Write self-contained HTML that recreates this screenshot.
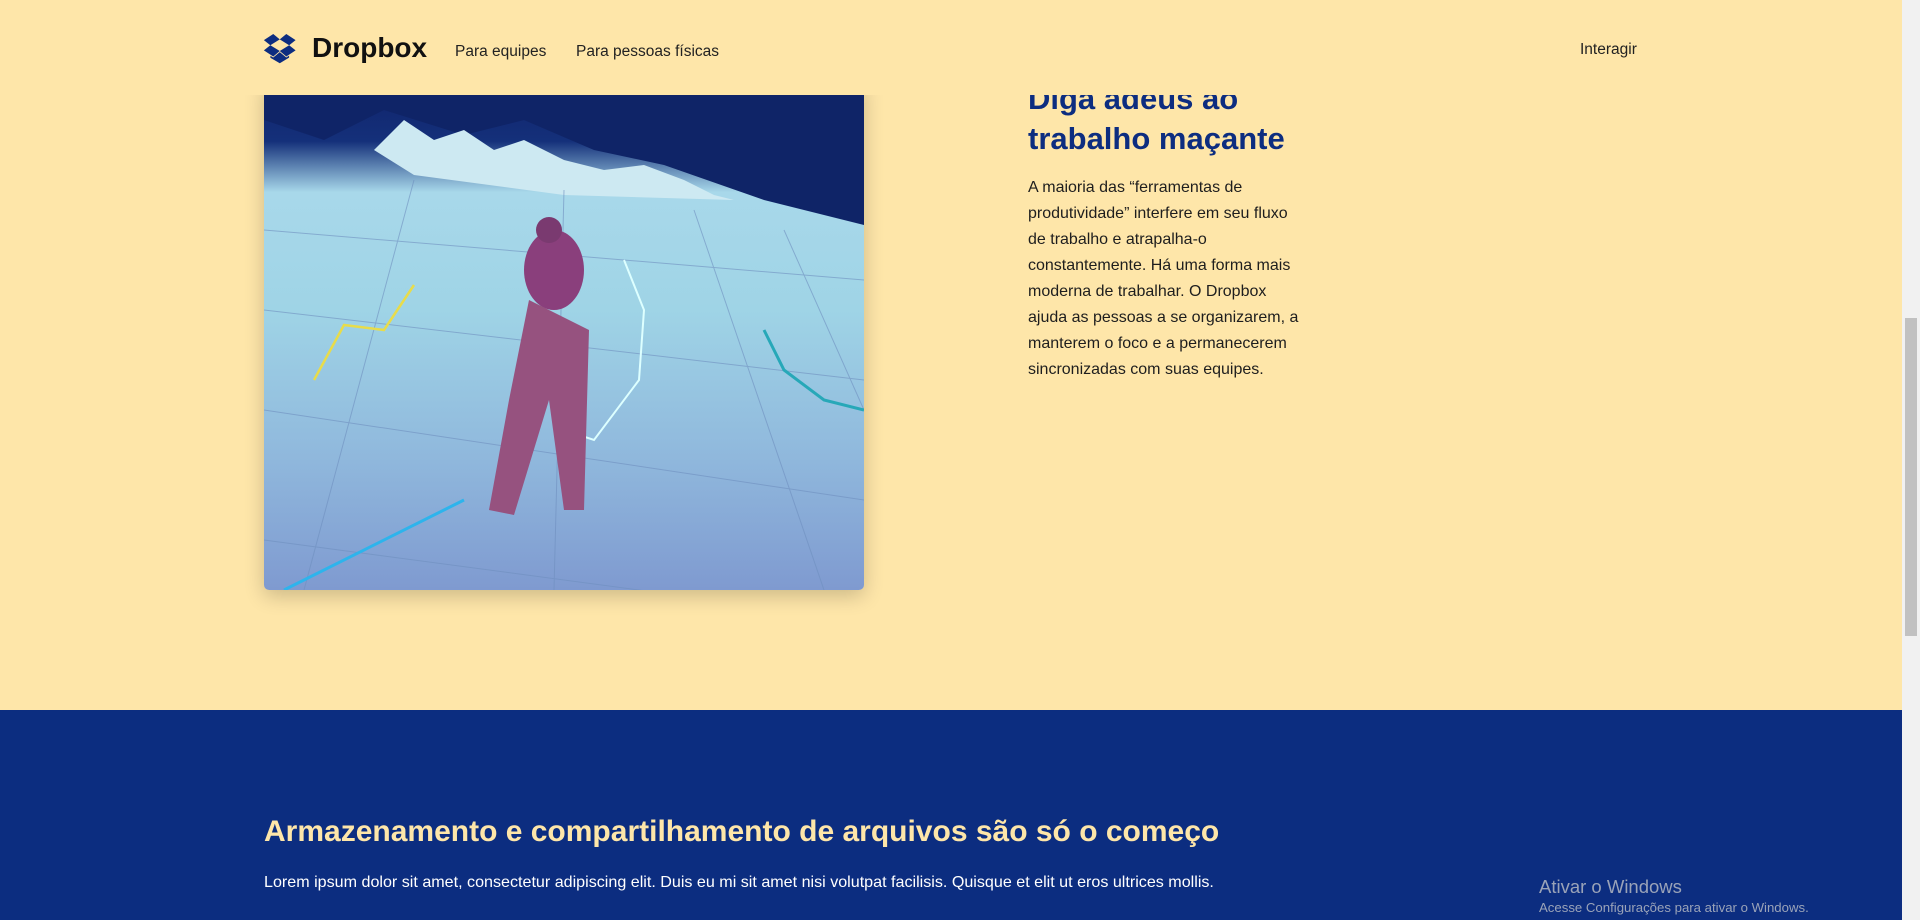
<!DOCTYPE html>
<html><head><meta charset="utf-8"><style>
*{margin:0;padding:0;box-sizing:border-box}
body{width:1920px;height:920px;overflow:hidden;background:#fee6a9;font-family:"Liberation Sans",sans-serif;position:relative}
.nav{position:absolute;left:0;top:0;width:1902px;height:95px;background:#fee6a9;z-index:5}
.logo{position:absolute;left:263px;top:34px}
.brand{position:absolute;left:312px;top:32px;font-size:28px;font-weight:bold;color:#111}
.nl{position:absolute;top:43px;font-size:15.5px;color:#222}
h2{position:absolute;left:1028px;top:79px;font-size:31px;line-height:40px;color:#0d2d80;font-weight:bold}
p.d{position:absolute;left:1028px;top:175px;white-space:nowrap;font-size:16px;line-height:26px;color:#1e1e1e}
.img{position:absolute;left:264px;top:80px;width:600px;height:510px;border-radius:5px;overflow:hidden;box-shadow:0 6px 20px rgba(0,0,0,.2);background:linear-gradient(180deg,#10226a 0%,#14307a 12%,#a8d8ea 22%,#9fd4e6 45%,#8fb7dc 75%,#7f9ad0 100%)}
.blue{position:absolute;left:0;top:710px;width:1902px;height:210px;background:#0c2d80}
.blue h3{position:absolute;left:264px;top:105px;font-size:30px;color:#fee6a9;font-weight:bold}
.blue p{position:absolute;left:264px;top:163px;font-size:16.1px;color:#fff;white-space:nowrap}
.sb{position:absolute;right:0;top:0;width:18px;height:920px;background:#f1f1f1}
.th{position:absolute;right:3px;top:318px;width:12px;height:318px;background:#c1c1c1}
.win{position:absolute;left:1539px;top:876px;color:#9aa3b8;font-size:18.5px}
.win small{display:block;font-size:13.2px;margin-top:2px}
</style></head><body>
<div class="img">
<svg width="600" height="510" viewBox="0 0 600 510">
<polygon points="0,40 60,60 120,30 200,55 260,40 330,70 400,85 500,120 600,145 600,0 0,0" fill="#0f2467"/>
<polygon points="110,70 140,40 170,60 200,50 230,70 260,60 300,80 340,90 380,85 420,100 450,115 470,120 300,115 150,95" fill="#cde9f2"/>
<g stroke="#6f8fbf" stroke-width="1" fill="none" opacity=".6">
<path d="M0,150 L600,200"/><path d="M0,230 L600,300"/><path d="M0,330 L600,420"/><path d="M0,460 L600,540"/>
<path d="M150,100 L40,510"/><path d="M300,110 L290,510"/><path d="M430,130 L560,510"/><path d="M520,150 L600,330"/>
</g>
<path d="M50,300 L80,245 L120,250 L150,205" stroke="#e8dc4a" stroke-width="2.5" fill="none"/>
<path d="M360,180 L380,230 L375,300 L330,360 L300,350" stroke="#dff" stroke-width="2" fill="none"/>
<path d="M500,250 L520,290 L560,320 L600,330" stroke="#27a8b8" stroke-width="3" fill="none"/>
<path d="M20,510 L200,420" stroke="#2db4ec" stroke-width="3" fill="none"/>
<ellipse cx="290" cy="190" rx="30" ry="40" fill="#8a3f7c"/>
<path d="M265,220 L245,320 L225,430 L250,435 L285,320 L300,430 L320,430 L325,250 Z" fill="#96527f"/>
<circle cx="285" cy="150" r="13" fill="#7a3a70"/>
</svg>
</div>
<div class="nav">
<svg class="logo" width="34" height="30" viewBox="0 0 43 40" style="width:34px;height:30px"><path fill="#0d2d80" d="M12.5 0L0 8.1l8.6 6.9 12.6-7.8zM0 21.8l12.5 8.2 8.7-7.3-12.6-7.7zm21.2.9l8.7 7.3 12.4-8.1-8.6-6.9zM42.3 8.1L29.9 0l-8.7 7.2 12.5 7.8zM21.2 24.2l-8.7 7.2-3.8-2.4v2.7L21.2 39l12.4-7.5v-2.7l-3.7 2.5z"/></svg>
<div class="brand">Dropbox</div>
<div class="nl" style="left:455px">Para equipes</div>
<div class="nl" style="left:576px">Para pessoas físicas</div>
<div class="nl" style="left:1580px;top:41px">Interagir</div>
</div>
<h2>Diga adeus ao<br>trabalho maçante</h2>
<p class="d">A maioria das “ferramentas de<br>produtividade” interfere em seu fluxo<br>de trabalho e atrapalha-o<br>constantemente. Há uma forma mais<br>moderna de trabalhar. O Dropbox<br>ajuda as pessoas a se organizarem, a<br>manterem o foco e a permanecerem<br>sincronizadas com suas equipes.</p>
<div class="blue"><h3>Armazenamento e compartilhamento de arquivos são só o começo</h3>
<p>Lorem ipsum dolor sit amet, consectetur adipiscing elit. Duis eu mi sit amet nisi volutpat facilisis. Quisque et elit ut eros ultrices mollis.</p></div>
<div class="win">Ativar o Windows<small>Acesse Configurações para ativar o Windows.</small></div>
<div class="sb"><div class="th"></div></div>
</body></html>
